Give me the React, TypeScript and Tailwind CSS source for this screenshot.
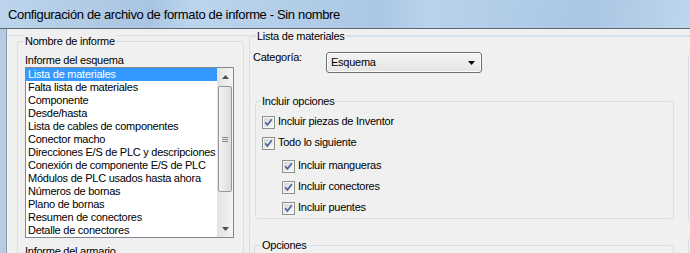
const informes = [
  "Lista de materiales",
  "Falta lista de materiales",
  "Componente",
  "Desde/hasta",
  "Lista de cables de componentes",
  "Conector macho",
  "Direcciones E/S de PLC y descripciones",
  "Conexión de componente E/S de PLC",
  "Módulos de PLC usados hasta ahora",
  "Números de bornas",
  "Plano de bornas",
  "Resumen de conectores",
  "Detalle de conectores",
];

function Check() {
  return (
    <svg width="13" height="13" viewBox="0 0 13 13" className="shrink-0">
      <defs>
        <linearGradient id="cbfill" x1="0" y1="0" x2="1" y2="1">
          <stop offset="0" stopColor="#d4d4d4" />
          <stop offset="1" stopColor="#f9f9f9" />
        </linearGradient>
      </defs>
      <rect x="0.5" y="0.5" width="12" height="12" fill="#f6f6f6" stroke="#8e8f8f" />
      <rect x="2" y="2" width="9" height="9" fill="url(#cbfill)" />
      <path d="M3.2 6.3 L5.4 8.9 L9.8 3.2" fill="none" stroke="#4a6399" strokeWidth="1.7" />
    </svg>
  );
}

function Arrow({ up }: { up?: boolean }) {
  return (
    <svg width="7" height="4" viewBox="0 0 7 4">
      <path d={up ? "M0 4 L3.5 0 L7 4 Z" : "M0 0 L7 0 L3.5 4 Z"} fill="#4d4d4d" />
    </svg>
  );
}

function Scrollbar() {
  return (
    <div className="w-[16px] shrink-0 flex flex-col bg-[linear-gradient(to_right,#e2e2e2,#f4f4f4)]">
      <div className="h-[17px] flex items-center justify-center">
        <Arrow up />
      </div>
      <div className="mt-px mx-px h-[106px] rounded-[2px] border border-[#979797] bg-[linear-gradient(to_right,#f4f4f4,#dcdcdc)] flex flex-col items-center justify-center gap-[1px]">
        <div className="w-[6px] h-px bg-[#8a8a8a]" />
        <div className="w-[6px] h-px bg-[#8a8a8a]" />
        <div className="w-[6px] h-px bg-[#8a8a8a]" />
      </div>
      <div className="flex-1" />
      <div className="h-[17px] flex items-center justify-center">
        <Arrow />
      </div>
    </div>
  );
}

function CheckRow({ label, indent, className }: { label: string; indent?: boolean; className?: string }) {
  return (
    <div className={`flex items-center h-[13px] gap-[3px] ${indent ? "ml-[20px]" : ""} ${className ?? ""}`}>
      <Check />
      <span className="mb-[2px]">{label}</span>
    </div>
  );
}

export default function App() {
  return (
    <div className="w-[690px] h-[253px] overflow-hidden bg-[#f0f0f0] font-['Liberation_Sans',Arial,sans-serif] text-[11px] leading-[13px] tracking-[-0.25px] text-black">
      {/* Title bar */}
      <div className="h-[28px] pl-[8px] pt-[7px] text-[13px] leading-[16px] tracking-[-0.35px] whitespace-nowrap bg-[linear-gradient(100deg,#bdd4ec_0%,#a9c5e1_22%,#bbd5ee_28%,#abc7e3_55%,#b9d3ed_62%,#aac6e2_85%,#bed6ee_100%)]">
        Configuración de archivo de formato de informe - Sin nombre
      </div>
      <div className="h-px bg-[#5b6773]" />

      <div className="flex h-[224px]">
        <div className="w-[6px] shrink-0 bg-[#b7cce4]" />
        <div className="w-px shrink-0 bg-[#8d9aa8]" />
        <div className="flex-1 min-w-0">
          <div className="h-[7px] border-b border-[#d8e1e8]" />
          <div className="flex items-start">
            {/* Nombre de informe */}
            <fieldset className="ml-[10px] -mt-px w-[227px] h-[240px] shrink-0 border border-[#d5dfe5] rounded-[3px]">
              <legend className="ml-[6px] px-px bg-[#f0f0f0]">Nombre de informe</legend>
              <div className="pl-[7px] pt-[6px]">
                <div>Informe del esquema</div>
                <div className="w-[209px] h-[171px] border border-[#828790] bg-white flex">
                  <div className="flex-1 min-w-0">
                    {informes.map((name, i) => (
                      <div
                        key={name}
                        className={`h-[13px] pl-[2px] whitespace-nowrap overflow-hidden ${i === 0 ? "bg-[#3399ff] text-white" : ""}`}
                      >
                        {name}
                      </div>
                    ))}
                  </div>
                  <Scrollbar />
                </div>
                <div className="mt-[7px]">Informe del armario</div>
              </div>
            </fieldset>

            {/* Lista de materiales */}
            <fieldset className="ml-[5px] -mt-[6px] w-[460px] h-[260px] shrink-0 border border-[#d5dfe5] rounded-[3px]">
              <legend className="ml-[6px] px-px bg-[#f0f0f0]">Lista de materiales</legend>
              <div className="flex items-start">
                <div className="w-[424px] shrink-0">
                  <div className="mt-[9px] flex items-start">
                    <div className="w-[76px] pl-[3px] -mt-px">Categoría:</div>
                    <div className="w-[156px] h-[21px] rounded-[3px] border border-[#707070] bg-[linear-gradient(#f4f4f4,#e4e4e4)] shadow-[inset_0_0_0_1px_#fbfbfb] flex items-center justify-between pl-[4px] pr-[6px]">
                      <span>Esquema</span>
                      <svg width="7" height="4" viewBox="0 0 7 4">
                        <path d="M0 0 L7 0 L3.5 4 Z" fill="#000" />
                      </svg>
                    </div>
                  </div>

                  <fieldset className="mt-[22px] ml-[5px] w-[419px] h-[124px] border border-[#d5dfe5] rounded-[3px]">
                    <legend className="ml-[5px] px-px bg-[#f0f0f0]">Incluir opciones</legend>
                    <div className="pl-[6px] pt-[8px] flex flex-col">
                      <CheckRow label="Incluir piezas de Inventor" />
                      <CheckRow label="Todo lo siguiente" className="mt-[8px]" />
                      <CheckRow label="Incluir mangueras" indent className="mt-[10px]" />
                      <CheckRow label="Incluir conectores" indent className="mt-[8px]" />
                      <CheckRow label="Incluir puentes" indent className="mt-[8px]" />
                    </div>
                  </fieldset>

                  <fieldset className="mt-[20px] ml-[4px] w-[420px] h-[40px] border border-[#d5dfe5] rounded-[3px]">
                    <legend className="ml-[6px] px-px bg-[#f0f0f0]">Opciones</legend>
                  </fieldset>
                </div>

                <div className="ml-[14px] shrink-0">
                  <div className="mt-[12px] w-[40px] h-[168px] border border-[#d5dfe5] rounded-[3px]" />
                  <div className="mt-[15px] w-[40px] h-[40px] border border-[#d5dfe5] rounded-[3px]" />
                </div>
              </div>
            </fieldset>
          </div>
        </div>
      </div>
    </div>
  );
}
